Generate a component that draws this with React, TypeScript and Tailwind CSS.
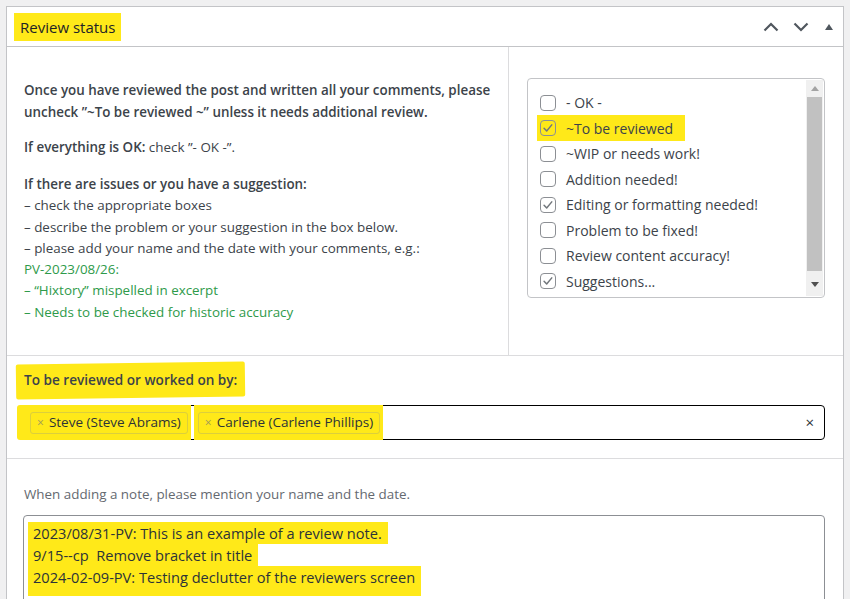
import React from "react";

const font = { fontFamily: '"Open Sans", "Noto Sans", Arial, sans-serif' };

function Check({ checked }: { checked: boolean }) {
  return (
    <span className="flex h-[16px] w-[16px] shrink-0 items-center justify-center rounded-[4px] border border-[#8c8f94]">
      {checked && (
        <svg width="14" height="14" viewBox="0 0 16 16">
          <path d="M3.5 8.2l3 3.2 5.8-7" fill="none" stroke="#72777c" strokeWidth="1.7" strokeLinecap="round" strokeLinejoin="round" />
        </svg>
      )}
    </span>
  );
}

const items: [string, boolean, boolean][] = [
  ["- OK -", false, false],
  ["~To be reviewed", true, true],
  ["~WIP or needs work!", false, false],
  ["Addition needed!", false, false],
  ["Editing or formatting needed!", true, false],
  ["Problem to be fixed!", false, false],
  ["Review content accuracy!", false, false],
  ["Suggestions...", true, false],
];

function Tag({ label }: { label: string }) {
  return (
    <span className="flex h-[22px] items-center gap-[5px] rounded-[3px] border border-[#dccf3c] px-[6px] text-[13.5px] text-[#2c3338]">
      <span className="text-[12px] leading-none text-[#a09a5a]">×</span>
      {label}
    </span>
  );
}

export default function App() {
  return (
    <div className="min-h-screen bg-[#f0f0f1] pl-[6px] pr-[6px] pt-[6px]" style={font}>
      <div className="w-[838px] border border-[#c3c4c7] bg-white">
        {/* header */}
        <div className="flex h-[40px] items-center justify-between border-b border-[#c3c4c7] pl-[7px] pr-[7px]">
          <span className="mt-[1px] flex h-[28px] items-center bg-[#ffe919] px-[6px] text-[15px] text-[#1d2327]">Review status</span>
          <div className="flex items-center gap-[12px]">
            <svg width="18" height="18" viewBox="0 0 18 18">
              <path d="M2.5 12.5L9 6l6.5 6.5" fill="none" stroke="#50575e" strokeWidth="2.2" />
            </svg>
            <svg width="18" height="18" viewBox="0 0 18 18">
              <path d="M2.5 5.5L9 12l6.5-6.5" fill="none" stroke="#50575e" strokeWidth="2.2" />
            </svg>
            <svg width="14" height="14" viewBox="0 0 14 14">
              <path d="M3 10h8L7 4z" fill="#50575e" />
            </svg>
          </div>
        </div>

        {/* row 1 */}
        <div className="flex h-[308px]">
          <div className="flex-1 pl-[17px] pt-[32px] text-[13.4px] leading-[22px] text-[#3c434a]">
            <p className="whitespace-nowrap font-semibold text-[#3c434a]">
              Once you have reviewed the post and written all your comments, please
              <br />
              uncheck ”~To be reviewed ~” unless it needs additional review.
            </p>
            <p className="mt-[13px] whitespace-nowrap">
              <span className="font-semibold">If everything is OK:</span> check ”- OK -”.
            </p>
            <div className="mt-[16px] whitespace-nowrap leading-[21.3px]">
              <div className="font-semibold">If there are issues or you have a suggestion:</div>
              <div>– check the appropriate boxes</div>
              <div>– describe the problem or your suggestion in the box below.</div>
              <div>– please add your name and the date with your comments, e.g.:</div>
              <div className="text-[#2e9a4a]">PV-2023/08/26:</div>
              <div className="text-[#2e9a4a]">– “Hixtory” mispelled in excerpt</div>
              <div className="text-[#2e9a4a]">– Needs to be checked for historic accuracy</div>
            </div>
          </div>
          <div className="w-[335px] border-l border-[#dcdcde] pl-[18px] pt-[31px]">
            <div className="flex h-[220px] w-[298px] rounded-[4px] border border-[#c3c4c7]">
              <div className="flex-1 pl-[12px] pt-[11px]">
                {items.map(([label, checked, hl]) => (
                  <div key={label} className="flex h-[25.5px] items-center">
                    <div className={hl ? "-ml-[3px] flex h-[26px] items-center gap-[10px] bg-[#ffe919] pl-[3px] pr-[12px]" : "flex items-center gap-[10px]"}>
                      <Check checked={checked} />
                      <span className="text-[14px] text-[#3c434a]">{label}</span>
                    </div>
                  </div>
                ))}
              </div>
              <div className="my-[1px] mr-[1px] flex w-[17px] flex-col bg-[#f0f0f0]">
                <div className="flex h-[17px] items-center justify-center">
                  <svg width="8" height="5" viewBox="0 0 8 5"><path d="M0 5h8L4 0z" fill="#a3a3a3" /></svg>
                </div>
                <div className="mx-[1px] mb-[1px] flex-1 bg-[#c1c1c1]" />
                <div className="flex h-[24px] items-center justify-center">
                  <svg width="8" height="5" viewBox="0 0 8 5"><path d="M0 0h8L4 5z" fill="#505050" /></svg>
                </div>
              </div>
            </div>
          </div>
        </div>

        {/* row 2 */}
        <div className="h-[103px] border-t border-[#dcdcde] pl-[9px] pr-[18px] pt-[7px]">
          <div className="inline-flex h-[35px] -rotate-[0.8deg] items-center rounded-[2px] bg-[#ffe919] px-[8px] text-[13.6px] font-semibold text-[#3c434a]">
            <span className="rotate-[0.8deg]">To be reviewed or worked on by:</span>
          </div>
          <div className="ml-[7px] mt-[7px] flex h-[35px] items-center rounded-[4px] border border-black pr-[10px]">
            <div className="-ml-[7px] flex h-[35px] flex-1 items-center gap-[3px]">
              <span className="flex h-[35px] items-center rounded-l-[3px] bg-[#ffe919] pl-[13px] pr-[3px]">
                <Tag label="Steve (Steve Abrams)" />
              </span>
              <span className="flex h-[35px] items-center bg-[#ffe919] pl-[4px] pr-[3px]">
                <Tag label="Carlene (Carlene Phillips)" />
              </span>
            </div>
            <span className="text-[15px] text-[#2c3338]">×</span>
          </div>
        </div>

        {/* row 3 */}
        <div className="border-t border-[#dcdcde] pl-[16px] pr-[18px] pt-[25px]">
          <div className="pl-[1px] text-[13.4px] text-[#646970]">When adding a note, please mention your name and the date.</div>
          <div className="mt-[11px] h-[120px] rounded-t-[4px] border border-[#8c8f94] pl-[4px] pt-[6px] text-[14.6px] leading-[22px] text-[#2c3338]">
            <div className="inline-block bg-[#ffe919] pl-[5px] pr-[6px]">2023/08/31-PV: This is an example of a review note.</div>
            <br />
            <div className="inline-block bg-[#ffe919] pl-[5px] pr-[6px]">9/15--cp&nbsp; Remove bracket in title</div>
            <br />
            <div className="inline-block bg-[#ffe919] pb-[8px] pl-[5px] pr-[6px]">2024-02-09-PV: Testing declutter of the reviewers screen</div>
          </div>
        </div>
      </div>
    </div>
  );
}
